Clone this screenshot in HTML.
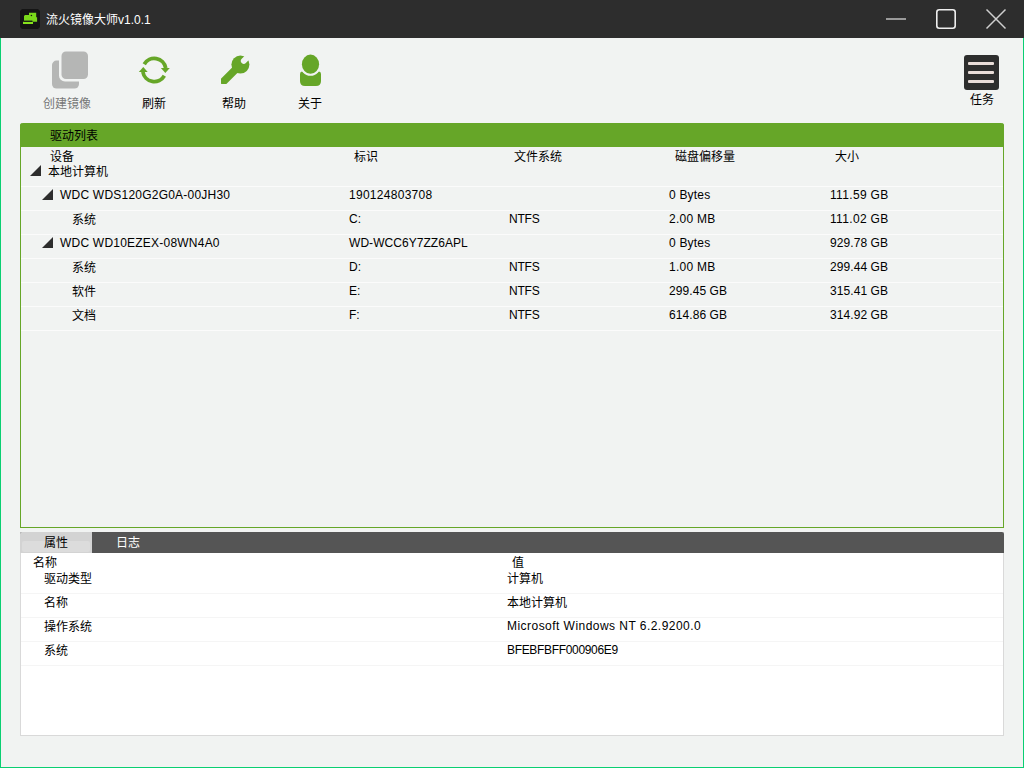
<!DOCTYPE html>
<html lang="zh-CN"><head><meta charset="utf-8"><style>
*{margin:0;padding:0;box-sizing:border-box}
html,body{width:1024px;height:768px;overflow:hidden;background:#f1f3f2;font-family:"Liberation Sans",sans-serif;font-size:12px;color:#000}
.abs{position:absolute;white-space:nowrap}
#title{position:absolute;left:0;top:0;width:1024px;height:38px;background:#2d2d2d}
#frame{position:absolute;left:0;top:38px;width:1024px;height:730px;border:1px solid #0acf72;border-top:none}
.t{position:absolute;white-space:nowrap;line-height:14px}
#list{position:absolute;left:20px;top:123px;width:984px;height:405px;border:1px solid #66a628;border-top:none;border-radius:3px 3px 0 0}
#lhead{position:absolute;left:20px;top:123px;width:984px;height:24px;background:#66a628;border-radius:3px 3px 0 0}
.sep{position:absolute;left:21px;width:982px;height:1px;background:#fbfbfb}
.tri{position:absolute;width:0;height:0;border-style:solid;border-width:0 0 11px 11px;border-color:transparent transparent #2d2d2d transparent}
#prop{position:absolute;left:20px;top:532px;width:984px;height:204px;background:#fff;border:1px solid #d9d9d9;border-top:none}
#phead{position:absolute;left:20px;top:532px;width:984px;height:21px;background:#555;border-radius:2px 2px 0 0}
#ptab{position:absolute;left:20px;top:532px;width:72px;height:21px;background:#d3d3d3;border-radius:2px 0 0 0}
#ptabin{position:absolute;left:22px;top:541px;width:68px;height:11px;background:#dcdcdc;border-radius:2px}
.psep{position:absolute;left:21px;width:982px;height:1px;background:#f5f5f5}
</style></head><body>
<div id="title">
  <svg class="abs" style="left:18px;top:7px" width="24" height="24" viewBox="18 7 24 24">
    <path d="M22 9 L38 9 L40 11 L40 27 L38 29 L22 29 L20 27 L20 11 Z" fill="#151515"/>
    <path d="M29 12.8 L36.2 12.8 L36.2 17.3 L37.1 17.3 L37.1 21.7 L32.4 21.7 L32.4 20.9 L24 20.9 L24 16 L25 15 L29 15 Z" fill="#7ad81a"/>
    <rect x="23" y="21.8" width="10" height="2.2" fill="#86e21c"/>
    <rect x="24" y="20.6" width="8.4" height="1" fill="#151515"/>
    <circle cx="31.4" cy="15.5" r="0.8" fill="#151515"/>
  </svg>
  <div class="t" style="left:46px;top:13px;color:#fff">流火镜像大师v1.0.1</div>
  <div class="abs" style="left:886px;top:18px;width:20px;height:2px;background:#9a9a9a"></div>
  <svg class="abs" style="left:935px;top:8px" width="22" height="22" viewBox="0 0 22 22"><rect x="1.8" y="1.8" width="18.4" height="18.4" rx="2.5" fill="none" stroke="#eee" stroke-width="1.6"/></svg>
  <svg class="abs" style="left:985px;top:8px" width="22" height="22" viewBox="0 0 22 22"><path d="M1.5 1.5 L20.5 20.5 M20.5 1.5 L1.5 20.5" stroke="#cfcfcf" stroke-width="1.5"/></svg>
</div>
<div id="frame"></div>
<svg class="abs" style="left:40px;top:45px" width="60" height="50" viewBox="40 45 60 50">
  <rect x="52" y="60.6" width="27" height="28" rx="4.5" fill="#b5b6b5"/>
  <rect x="59" y="49" width="31.5" height="32.5" rx="6" fill="#f1f3f2"/>
  <rect x="61.5" y="51.5" width="26.5" height="27.5" rx="4.5" fill="#b5b6b5"/>
</svg>
<svg class="abs" style="left:130px;top:48px" width="50" height="44" viewBox="130 48 50 44">
  <path d="M144.25 64.2 A11.6 11.6 0 0 1 165.72 67.99" fill="none" stroke="#66a628" stroke-width="3.8"/>
  <path d="M164.35 75.8 A11.6 11.6 0 0 1 142.88 72.01" fill="none" stroke="#66a628" stroke-width="3.8"/>
  <path d="M160.9 68 L169.8 68 L165.3 72.9 Z" fill="#66a628"/>
  <path d="M147.7 72 L138.8 72 L143.3 67.1 Z" fill="#66a628"/>
</svg>
<svg class="abs" style="left:210px;top:48px" width="50" height="44" viewBox="210 48 50 44">
  <defs><mask id="wm"><rect x="210" y="48" width="50" height="44" fill="#fff"/><path d="M243.8 60.9 L254 50.7" stroke="#000" stroke-width="5.8" stroke-linecap="round"/></mask></defs>
  <g mask="url(#wm)"><path d="M240.4 64.6 L223.9 81.1" stroke="#66a628" stroke-width="7.7" stroke-linecap="round"/>
  <circle cx="240.4" cy="64.6" r="9" fill="#66a628"/></g>
</svg>
<svg class="abs" style="left:285px;top:48px" width="50" height="44" viewBox="285 48 50 44">
  <defs><mask id="pm"><rect x="285" y="48" width="50" height="44" fill="#fff"/><ellipse cx="310.5" cy="64.2" rx="10.6" ry="11.6" fill="#000"/></mask></defs>
  <ellipse cx="310.5" cy="64.2" rx="8.6" ry="9.6" fill="#66a628"/>
  <path d="M300 74 Q300 71.5 302 71.5 L319 71.5 Q321 71.5 321 74 L321 81 Q321 86 316 86 L305 86 Q300 86 300 81 Z" fill="#66a628" mask="url(#pm)"/>
</svg>
<div class="t" style="left:43px;top:97px;color:#777">创建镜像</div>
<div class="t" style="left:142px;top:97px;">刷新</div>
<div class="t" style="left:222px;top:97px;">帮助</div>
<div class="t" style="left:298px;top:97px;">关于</div>
<div class="abs" style="left:964px;top:55px;width:35px;height:35px;background:#2d2d2d;border-radius:3px"></div>
<div class="abs" style="left:968px;top:62px;width:26px;height:3px;background:#e8dcd8;border-radius:1px"></div>
<div class="abs" style="left:968px;top:71px;width:26px;height:3px;background:#e8dcd8;border-radius:1px"></div>
<div class="abs" style="left:968px;top:80px;width:26px;height:3px;background:#e8dcd8;border-radius:1px"></div>
<div class="t" style="left:970px;top:93px;">任务</div>
<div id="list"></div><div id="lhead"></div>
<div class="t" style="left:50px;top:129px;">驱动列表</div>
<div class="t" style="left:50px;top:150px;">设备</div>
<div class="t" style="left:354px;top:150px;">标识</div>
<div class="t" style="left:514px;top:150px;">文件系统</div>
<div class="t" style="left:675px;top:150px;">磁盘偏移量</div>
<div class="t" style="left:835px;top:150px;">大小</div>
<div class="tri" style="left:30px;top:165px"></div>
<div class="t" style="left:48px;top:165px;">本地计算机</div>
<div class="sep" style="top:186px"></div>
<div class="tri" style="left:42px;top:189px"></div>
<div class="t" style="left:60px;top:188px;letter-spacing:0.22px;">WDC WDS120G2G0A-00JH30</div>
<div class="t" style="left:349px;top:188px;letter-spacing:0.28px;">190124803708</div>
<div class="t" style="left:669px;top:188px;letter-spacing:0.2px;">0 Bytes</div>
<div class="t" style="left:830px;top:188px;letter-spacing:0.33px;">111.59 GB</div>
<div class="sep" style="top:210px"></div>
<div class="t" style="left:72px;top:213px;">系统</div>
<div class="t" style="left:349px;top:212px;letter-spacing:0px;">C:</div>
<div class="t" style="left:509px;top:212px;letter-spacing:-0.2px;">NTFS</div>
<div class="t" style="left:669px;top:212px;letter-spacing:0.27px;">2.00 MB</div>
<div class="t" style="left:830px;top:212px;letter-spacing:0.33px;">111.02 GB</div>
<div class="sep" style="top:234px"></div>
<div class="tri" style="left:42px;top:237px"></div>
<div class="t" style="left:60px;top:236px;letter-spacing:0.22px;">WDC WD10EZEX-08WN4A0</div>
<div class="t" style="left:349px;top:236px;letter-spacing:0.05px;">WD-WCC6Y7ZZ6APL</div>
<div class="t" style="left:669px;top:236px;letter-spacing:0.2px;">0 Bytes</div>
<div class="t" style="left:830px;top:236px;letter-spacing:0.08px;">929.78 GB</div>
<div class="sep" style="top:258px"></div>
<div class="t" style="left:72px;top:261px;">系统</div>
<div class="t" style="left:349px;top:260px;letter-spacing:0px;">D:</div>
<div class="t" style="left:509px;top:260px;letter-spacing:-0.2px;">NTFS</div>
<div class="t" style="left:669px;top:260px;letter-spacing:0.27px;">1.00 MB</div>
<div class="t" style="left:830px;top:260px;letter-spacing:0.08px;">299.44 GB</div>
<div class="sep" style="top:282px"></div>
<div class="t" style="left:72px;top:285px;">软件</div>
<div class="t" style="left:349px;top:284px;letter-spacing:0px;">E:</div>
<div class="t" style="left:509px;top:284px;letter-spacing:-0.2px;">NTFS</div>
<div class="t" style="left:669px;top:284px;letter-spacing:0.08px;">299.45 GB</div>
<div class="t" style="left:830px;top:284px;letter-spacing:0.08px;">315.41 GB</div>
<div class="sep" style="top:306px"></div>
<div class="t" style="left:72px;top:309px;">文档</div>
<div class="t" style="left:349px;top:308px;letter-spacing:0px;">F:</div>
<div class="t" style="left:509px;top:308px;letter-spacing:-0.2px;">NTFS</div>
<div class="t" style="left:669px;top:308px;letter-spacing:0.08px;">614.86 GB</div>
<div class="t" style="left:830px;top:308px;letter-spacing:0.08px;">314.92 GB</div>
<div class="sep" style="top:330px"></div>
<div id="prop"></div><div id="phead"></div><div id="ptab"></div><div id="ptabin"></div>
<div class="t" style="left:44px;top:536px;">属性</div>
<div class="t" style="left:116px;top:536px;color:#fff">日志</div>
<div class="t" style="left:33px;top:556px;">名称</div>
<div class="t" style="left:512px;top:556px;">值</div>
<div class="t" style="left:44px;top:572px;">驱动类型</div>
<div class="t" style="left:507px;top:572px;">计算机</div>
<div class="psep" style="top:593px"></div>
<div class="t" style="left:44px;top:596px;">名称</div>
<div class="t" style="left:507px;top:596px;">本地计算机</div>
<div class="psep" style="top:617px"></div>
<div class="t" style="left:44px;top:620px;">操作系统</div>
<div class="t" style="left:507px;top:619px;letter-spacing:0.46px;">Microsoft Windows NT 6.2.9200.0</div>
<div class="psep" style="top:641px"></div>
<div class="t" style="left:44px;top:644px;">系统</div>
<div class="t" style="left:507px;top:643px;letter-spacing:-0.33px;">BFEBFBFF000906E9</div>
<div class="psep" style="top:665px"></div>
</body></html>
